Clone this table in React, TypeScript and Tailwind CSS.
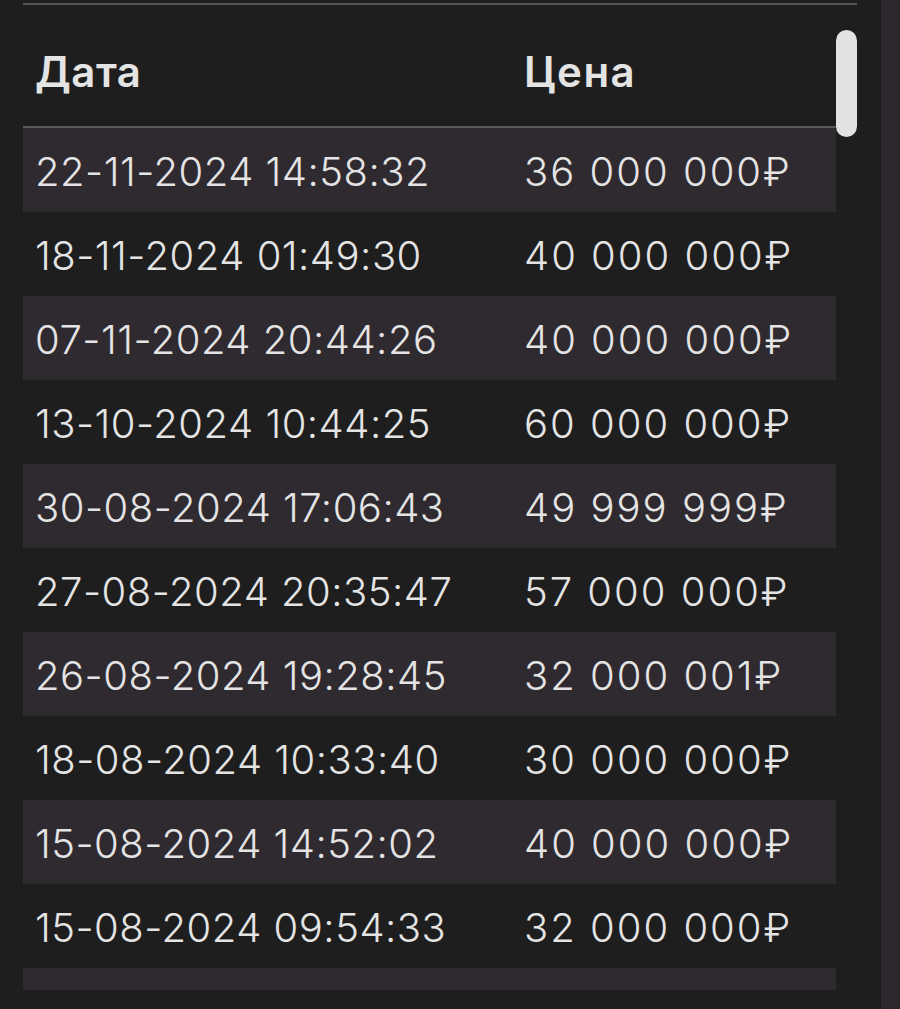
const rows = [
  { date: '22-11-2024 14:58:32', price: '36 000 000₽' },
  { date: '18-11-2024 01:49:30', price: '40 000 000₽' },
  { date: '07-11-2024 20:44:26', price: '40 000 000₽' },
  { date: '13-10-2024 10:44:25', price: '60 000 000₽' },
  { date: '30-08-2024 17:06:43', price: '49 999 999₽' },
  { date: '27-08-2024 20:35:47', price: '57 000 000₽' },
  { date: '26-08-2024 19:28:45', price: '32 000 001₽' },
  { date: '18-08-2024 10:33:40', price: '30 000 000₽' },
  { date: '15-08-2024 14:52:02', price: '40 000 000₽' },
  { date: '15-08-2024 09:54:33', price: '32 000 000₽' },
  { date: '', price: '' },
];

export default function App() {
  return (
    <div
      className="flex h-[1009px] w-[900px] overflow-hidden bg-[#1f1e1f] text-[#e4e4e4]"
      style={{ fontFamily: 'Inter, "Open Sans", sans-serif' }}
    >
      <div className="flex-1 pl-[23px] pr-[24px] pt-[3px]">
        <div className="h-[2px] bg-[#555457]" />
        <div className="relative h-[985px] overflow-hidden">
          {/* Table */}
          <div className="w-[813px]">
            <div className="grid h-[123px] grid-cols-[489px_1fr] items-center border-b-2 border-[#59585b] px-3 pt-[12px] text-[42px] font-semibold tracking-[0.5px]">
              <span>Дата</span>
              <span className="tracking-[1.5px]">Цена</span>
            </div>
            {rows.map((row, i) => (
              <div
                key={i}
                className={`grid h-[84px] grid-cols-[489px_1fr] items-center px-3 pt-[3px] text-[40px] font-light ${
                  i % 2 === 0 ? 'bg-[#2f2a30]' : ''
                }`}
              >
                <span className="tracking-[0.5px]">{row.date}</span>
                <span className="tracking-[2px]">{row.price}</span>
              </div>
            ))}
          </div>

          {/* Scrollbar thumb */}
          <div className="absolute right-0 top-[25px] h-[107px] w-[21px] rounded-full bg-[#e2e2e2]" />
        </div>
      </div>
      <div className="w-[19px] bg-[#2c282e]" />
    </div>
  );
}
